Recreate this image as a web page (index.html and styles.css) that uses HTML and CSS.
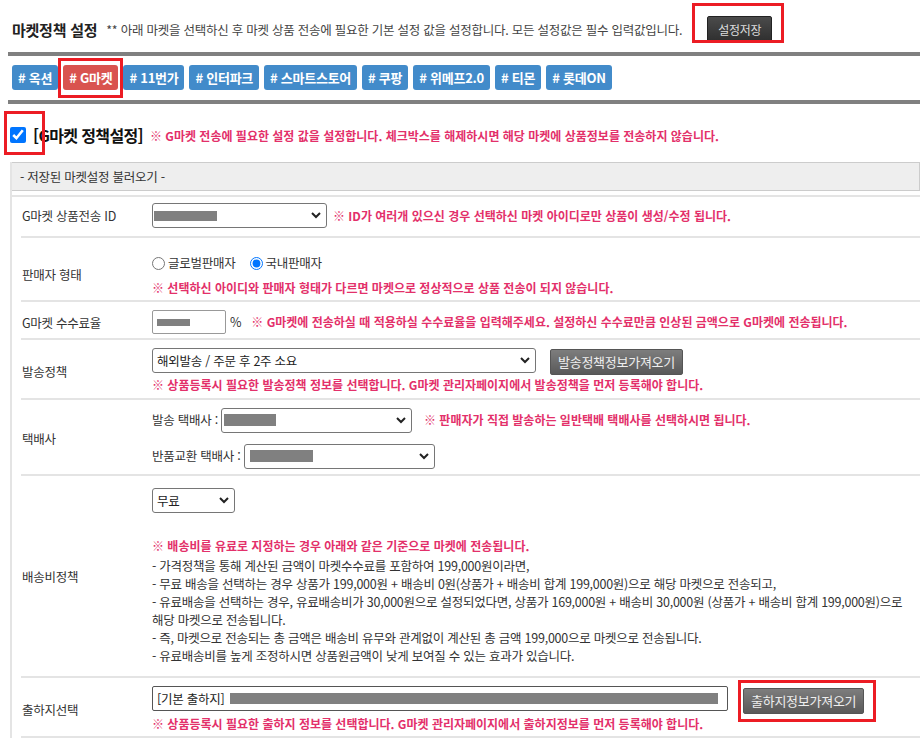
FILE: index.html
```html
<!DOCTYPE html>
<html lang="ko">
<head>
  <meta charset="UTF-8" />
  <meta name="viewport" content="width=device-width, initial-scale=1" />
  <title>마켓정책 설정</title>
  <link rel="stylesheet" href="styles.css">
</head>
<body>

  <div class="page">
    <div class="top">
      <h2 class="title">마켓정책 설정</h2>
      <span class="desc">** 아래 마켓을 선택하신 후 마켓 상품 전송에 필요한 기본 설정 값을 설정합니다. 모든 설정값은 필수 입력값입니다.</span>
      <span class="mark mark-save"><button type="button" class="btn-dark">설정저장</button></span>
    </div>
    <div class="rule"></div>

    <div class="tabs">
      <span class="tab"># 옥션</span>
      <span class="mark mark-tab"><span class="tab on"># G마켓</span></span>
      <span class="tab"># 11번가</span>
      <span class="tab"># 인터파크</span>
      <span class="tab"># 스마트스토어</span>
      <span class="tab"># 쿠팡</span>
      <span class="tab"># 위메프2.0</span>
      <span class="tab"># 티몬</span>
      <span class="tab"># 롯데ON</span>
    </div>
    <div class="rule"></div>

    <div class="market-head">
      <span class="mark mark-check"><input type="checkbox" id="useMarket" checked /></span>
      <label for="useMarket" class="market-name">[G마켓 정책설정]</label>
      <span class="warn">※ G마켓 전송에 필요한 설정 값을 설정합니다. 체크박스를 해제하시면 해당 마켓에 상품정보를 전송하지 않습니다.</span>
    </div>

    <div class="panel">
      <div class="panel-head">- 저장된 마켓설정 불러오기 -</div>

      <div class="panel-body">
        <div class="row row-id">
          <div class="row-label">G마켓 상품전송 ID</div>
          <div class="row-body line">
            <span class="sel sel-id"><span class="redact"></span><svg width="10" height="7" viewBox="0 0 10 7"><path d="M1 1l4 4 4-4" fill="none" stroke="#222" stroke-width="2"/></svg></span>
            <span class="warn">※ ID가 여러개 있으신 경우 선택하신 마켓 아이디로만 상품이 생성/수정 됩니다.</span>
          </div>
        </div>

        <div class="row row-seller">
          <div class="row-label">판매자 형태</div>
          <div class="row-body">
            <div class="radios">
              <label><input type="radio" name="seller" /> 글로벌판매자</label>
              <label><input type="radio" name="seller" checked /> 국내판매자</label>
            </div>
            <div class="warn">※ 선택하신 아이디와 판매자 형태가 다르면 마켓으로 정상적으로 상품 전송이 되지 않습니다.</div>
          </div>
        </div>

        <div class="row row-fee">
          <div class="row-label">G마켓 수수료율</div>
          <div class="row-body line">
            <span class="inp"><span class="redact"></span></span>
            <span class="unit">%</span>
            <span class="warn">※ G마켓에 전송하실 때 적용하실 수수료율을 입력해주세요. 설정하신 수수료만큼 인상된 금액으로 G마켓에 전송됩니다.</span>
          </div>
        </div>

        <div class="row row-ship">
          <div class="row-label">발송정책</div>
          <div class="row-body">
            <div class="line">
              <span class="sel sel-ship">해외발송 / 주문 후 2주 소요<svg width="10" height="7" viewBox="0 0 10 7"><path d="M1 1l4 4 4-4" fill="none" stroke="#222" stroke-width="2"/></svg></span>
              <button type="button" class="btn-gray btn-ship">발송정책정보가져오기</button>
            </div>
            <div class="warn">※ 상품등록시 필요한 발송정책 정보를 선택합니다. G마켓 관리자페이지에서 발송정책을 먼저 등록해야 합니다.</div>
          </div>
        </div>

        <div class="row row-courier">
          <div class="row-label">택배사</div>
          <div class="row-body">
            <div class="line">
              <span class="sub">발송 택배사 :</span>
              <span class="sel sel-courier"><span class="redact redact-a"></span><svg width="10" height="7" viewBox="0 0 10 7"><path d="M1 1l4 4 4-4" fill="none" stroke="#222" stroke-width="2"/></svg></span>
              <span class="warn">※ 판매자가 직접 발송하는 일반택배 택배사를 선택하시면 됩니다.</span>
            </div>
            <div class="line line-return">
              <span class="sub">반품교환 택배사 :</span>
              <span class="sel sel-courier"><span class="redact redact-b"></span><svg width="10" height="7" viewBox="0 0 10 7"><path d="M1 1l4 4 4-4" fill="none" stroke="#222" stroke-width="2"/></svg></span>
            </div>
          </div>
        </div>

        <div class="row row-fee-policy">
          <div class="row-label">배송비정책</div>
          <div class="row-body">
            <span class="sel sel-free">무료<svg width="10" height="7" viewBox="0 0 10 7"><path d="M1 1l4 4 4-4" fill="none" stroke="#222" stroke-width="2"/></svg></span>
            <div class="warn warn-fee">※ 배송비를 유료로 지정하는 경우 아래와 같은 기준으로 마켓에 전송됩니다.</div>
            <div class="help">
              - 가격정책을 통해 계산된 금액이 마켓수수료를 포함하여 199,000원이라면,<br>
              - 무료 배송을 선택하는 경우 상품가 199,000원 + 배송비 0원(상품가 + 배송비 합계 199,000원)으로 해당 마켓으로 전송되고,<br>
              - 유료배송을 선택하는 경우, 유료배송비가 30,000원으로 설정되었다면, 상품가 169,000원 + 배송비 30,000원 (상품가 + 배송비 합계 199,000원)으로<br>
              해당 마켓으로 전송됩니다.<br>
              - 즉, 마켓으로 전송되는 총 금액은 배송비 유무와 관계없이 계산된 총 금액 199,000으로 마켓으로 전송됩니다.<br>
              - 유료배송비를 높게 조정하시면 상품원금액이 낮게 보여질 수 있는 효과가 있습니다.
            </div>
          </div>
        </div>

        <div class="row row-origin">
          <div class="row-label">출하지선택</div>
          <div class="row-body">
            <div class="line line-top">
              <span class="sel sel-origin">[기본 출하지]<span class="redact redact-c"></span></span>
              <span class="mark mark-origin"><button type="button" class="btn-gray btn-origin">출하지정보가져오기</button></span>
            </div>
            <div class="warn">※ 상품등록시 필요한 출하지 정보를 선택합니다. G마켓 관리자페이지에서 출하지정보를 먼저 등록해야 합니다.</div>
          </div>
        </div>
      </div>
    </div>
  </div>

</body>
</html>
```

FILE: styles.css
```css
body {
  margin: 0;
  font-family: "Noto Sans CJK KR", "Noto Sans", sans-serif;
  font-size: 12.5px;
  color: #333;
  letter-spacing: -0.02em;
  background: #fff;
  overflow: hidden;
}
.page {
  padding-left: 8px;
}
.top {
  height: 52px;
  box-sizing: border-box;
  padding: 6px 0 0 4px;
  display: flex;
  align-items: center;
  white-space: nowrap;
}
.title {
  margin: 0;
  font-size: 15px;
  font-weight: 700;
  color: #222;
}
.desc {
  margin-left: 9px;
  color: #444;
}
.mark {
  position: relative;
  display: inline-block;
}
.mark::after {
  content: "";
  position: absolute;
  border: 3px solid #ec1c24;
  pointer-events: none;
}
.mark-save {
  margin-left: 25px;
}
.mark-save::after {
  left: -15px;
  right: -12px;
  top: -13px;
  bottom: -1px;
}
.btn-dark {
  display: block;
  height: 26px;
  padding: 0 10px;
  background: linear-gradient(#4b4b4b, #2f2f2f);
  border: 1px solid #222;
  border-radius: 2px;
  color: #ddd;
  font: inherit;
  font-size: 12px;
  letter-spacing: inherit;
}
.rule {
  height: 4px;
  background: #808080;
}
.tabs {
  display: flex;
  gap: 5px;
  padding: 9px 0 10px 4px;
}
.tab {
  display: block;
  height: 25px;
  line-height: 25px;
  padding: 0 6px;
  background: #428bca;
  color: #fff;
  font-size: 13px;
  font-weight: 700;
  letter-spacing: -0.02em;
  border-radius: 3px;
}
.tab.on {
  background: #d9534f;
}
.mark-tab::after {
  left: -5px;
  right: -5px;
  top: -7px;
  bottom: -8px;
}
.market-head {
  display: flex;
  align-items: center;
  height: 24px;
  padding: 19px 0 15px 2px;
  white-space: nowrap;
}
.market-head input {
  display: block;
  width: 16px;
  height: 16px;
  margin: 0;
}
.mark-check::after {
  left: -6px;
  right: -19px;
  top: -16px;
  bottom: -12px;
}
.market-name {
  margin-left: 7px;
  font-size: 16px;
  font-weight: 700;
  letter-spacing: -0.04em;
  color: #111;
}
.market-head .warn {
  margin-left: 7px;
}
.warn {
  color: #e3306a;
  font-size: 12px;
  font-weight: 700;
  letter-spacing: 0;
}
.panel {
  margin-left: 2px;
  border-left: 2px solid #e4e4e4;
}
.panel-head {
  height: 27px;
  line-height: 27px;
  padding-left: 8px;
  background: #eee;
  border: 1px solid #ccc;
  border-left: 0;
}
.panel-body {
  margin-top: 4px;
  padding-left: 9px;
  border-top: 2px solid #e4e4e4;
}
.row {
  display: flex;
  border-bottom: 2px solid #e4e4e4;
}
.row-label {
  flex: none;
  width: 130px;
  padding-left: 1px;
  align-self: center;
}
.row-body {
  flex: 1;
  line-height: 18px;
}
.line {
  display: flex;
  align-items: center;
  white-space: nowrap;
}
.sel {
  display: inline-flex;
  align-items: center;
  box-sizing: border-box;
  height: 25px;
  padding: 0 5px 0 4px;
  background: #fff;
  border: 1px solid #767676;
  border-radius: 3px;
  color: #222;
}
.sel svg {
  margin-left: auto;
}
.redact {
  display: block;
  height: 10px;
  background: #808080;
}
.row-id {
  padding: 6px 0 8px;
}
.sel-id {
  width: 175px;
  padding-left: 1px;
}
.sel-id .redact {
  width: 63px;
}
.row-id .warn {
  margin-left: 6px;
}
.row-seller {
  padding: 14px 0 3px;
}
.radios {
  display: flex;
  align-items: center;
  height: 22px;
  margin-bottom: 5px;
}
.radios label {
  display: flex;
  align-items: center;
  margin-right: 14px;
}
.radios input {
  margin: 0 3px 0 0;
}
.row-fee {
  padding: 8px 0 4px;
}
.inp {
  display: flex;
  align-items: center;
  box-sizing: border-box;
  width: 74px;
  height: 24px;
  padding-left: 4px;
  border: 1px solid #999;
  border-radius: 2px;
}
.inp .redact {
  width: 33px;
  height: 7px;
}
.unit {
  margin: 0 10px 0 4px;
}
.row-ship {
  padding: 8px 0 4px;
}
.row-ship .line {
  height: 26px;
  margin-bottom: 2px;
  align-items: flex-start;
}
.sel-ship {
  width: 384px;
}
.btn-gray {
  height: 26px;
  padding: 0 7px;
  background: linear-gradient(#7d7d7d, #595959);
  border: 1px solid #555;
  border-radius: 2px;
  color: #eee;
  font: inherit;
  font-size: 13px;
  letter-spacing: -0.02em;
  white-space: nowrap;
}
.btn-ship {
  margin: 1px 0 0 14px;
}
.row-courier {
  padding: 7px 0 5px;
}
.row-courier .line {
  height: 26px;
}
.line-return {
  margin-top: 10px;
}
.sub {
  margin-right: 3px;
}
.sel-courier {
  width: 191px;
  padding-left: 2px;
}
.redact-a {
  width: 52px;
  height: 12px;
}
.redact-b {
  width: 63px;
  height: 12px;
  margin-left: 3px;
}
.row-courier .warn {
  margin-left: 12px;
}
.row-fee-policy {
  padding: 12px 0 11px;
}
.sel-free {
  width: 83px;
}
.warn-fee {
  margin-top: 24px;
}
.help {
  margin-top: 2px;
  font-size: 12.5px;
}
.row-origin {
  padding: 8px 0 3px;
}
.line-top {
  height: 28px;
  align-items: flex-start;
  margin-bottom: 1px;
}
.sel-origin {
  width: 576px;
  border-color: #555;
  border-radius: 2px;
}
.redact-c {
  width: 488px;
  height: 11px;
  margin-left: 6px;
}
.mark-origin {
  margin: 2px 0 0 15px;
}
.mark-origin::after {
  left: -5px;
  right: -12px;
  top: -8px;
  bottom: -8px;
}
.btn-origin {
  display: block;
}
```
